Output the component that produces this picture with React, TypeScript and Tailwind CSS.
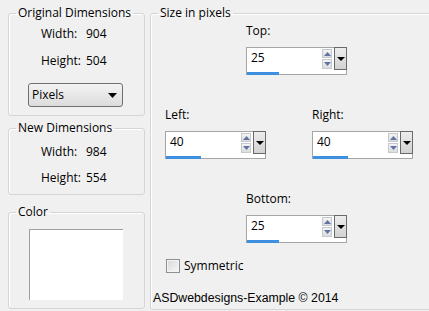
import React from "react";

const UI = { fontFamily: '"Open Sans", "Noto Sans", sans-serif' };

function Group({
  title,
  className,
  children,
}: {
  title: string;
  className: string;
  children?: React.ReactNode;
}) {
  return (
    <fieldset
      className={`border border-[#d5d5d5] rounded-[3px] shadow-[inset_1px_1px_0_#ffffff] ${className}`}
    >
      <legend className="ml-[7px] px-[2px] text-[12px] leading-[14px] text-black">
        {title}
      </legend>
      {children}
    </fieldset>
  );
}

function Tri({ up, color, w, h }: { up?: boolean; color: string; w: number; h: number }) {
  return (
    <svg width={w} height={h} viewBox={`0 0 ${w} ${h}`}>
      <polygon
        points={up ? `0,${h} ${w / 2},0 ${w},${h}` : `0,0 ${w},0 ${w / 2},${h}`}
        fill={color}
      />
    </svg>
  );
}

function Spinner({ value, bar }: { value: string; bar: number }) {
  return (
    <div className="relative w-[101px] h-[28px] border border-[#a5a5a5] bg-white">
      <div className="flex h-[23px]">
        <div className="flex-1 pl-[4px] pt-[2px] text-[12px] leading-[16px] text-black">{value}</div>
        <div className="flex flex-col gap-[1px] pt-[1px] w-[10px] mr-[2px]">
          <div className="h-[9px] border border-[#c4c8cf] bg-gradient-to-b from-[#f4f4f4] to-[#dcdcdc] flex items-center justify-center">
            <Tri up color="#5f74a3" w={7} h={4} />
          </div>
          <div className="h-[10px] border border-[#c4c8cf] bg-gradient-to-b from-[#f4f4f4] to-[#dcdcdc] flex items-center justify-center">
            <Tri color="#5f74a3" w={7} h={4} />
          </div>
        </div>
        <div className="w-[13px] h-[23px] border border-[#6a6a6a] bg-gradient-to-b from-[#ededed] to-[#d2d2d2] flex items-center justify-center -mt-[1px] -mr-[1px]">
          <Tri color="#000" w={8} h={4} />
        </div>
      </div>
      <div className="h-[3px] bg-[#3f8fe0] mt-[1px]" style={{ width: bar }} />
    </div>
  );
}

export default function App() {
  return (
    <div
      className="w-[429px] h-[311px] bg-[#f0f0f0] overflow-hidden flex text-black"
      style={UI}
    >
      <div className="ml-[8px] mt-[6px] w-[137px] shrink-0 flex flex-col">
        <Group title="Original Dimensions" className="h-[110px]">
          <div className="pt-[6px] pl-[32px] text-[12px] leading-[16px]">
            <div className="flex">
              <span className="w-[45px]">Width:</span>
              <span>904</span>
            </div>
            <div className="flex mt-[11px]">
              <span className="w-[45px]">Height:</span>
              <span>504</span>
            </div>
          </div>
          <div className="mt-[14px] ml-[19px] w-[95px] h-[24px] border border-[#707070] rounded-[3px] bg-gradient-to-b from-[#f3f3f3] to-[#dcdcdc] flex items-center justify-between pl-[3px] pr-[5px] text-[12px]">
            <span>Pixels</span>
            <Tri color="#000" w={9} h={5} />
          </div>
        </Group>
        <Group title="New Dimensions" className="h-[74px] mt-[5px]">
          <div className="pt-[9px] pl-[32px] text-[12px] leading-[16px]">
            <div className="flex">
              <span className="w-[45px]">Width:</span>
              <span>984</span>
            </div>
            <div className="flex mt-[10px]">
              <span className="w-[45px]">Height:</span>
              <span>554</span>
            </div>
          </div>
        </Group>
        <Group title="Color" className="h-[104px] mt-[10px]">
          <div className="mt-[10px] ml-[20px] w-[94px] h-[71px] bg-white border-l border-t border-[#a0a0a0]" />
        </Group>
      </div>

      <Group title="Size in pixels" className="ml-[5px] mt-[6px] w-[284px] h-[304px] shrink-0">
        <div className="flex flex-col text-[12px] leading-[16px]">
          <div className="pl-[95px] pt-[3px]">
            <div>Top:</div>
            <div className="mt-[8px]">
              <Spinner value="25" bar={32} />
            </div>
          </div>
          <div className="flex pl-[14px] mt-[32px]">
            <div>
              <div>Left:</div>
              <div className="mt-[8px]">
                <Spinner value="40" bar={35} />
              </div>
            </div>
            <div className="ml-[46px]">
              <div>Right:</div>
              <div className="mt-[8px]">
                <Spinner value="40" bar={35} />
              </div>
            </div>
          </div>
          <div className="pl-[95px] mt-[32px]">
            <div>Bottom:</div>
            <div className="mt-[8px]">
              <Spinner value="25" bar={32} />
            </div>
          </div>
          <div className="flex items-center pl-[15px] mt-[16px] h-[14px]">
            <div className="w-[14px] h-[14px] border border-[#8e8f8f] bg-gradient-to-br from-[#d8d8d8] to-[#f8f8f8] shadow-[inset_0_0_0_1px_#f4f4f4]" />
            <span className="ml-[4px]">Symmetric</span>
          </div>
          <div
            className="pl-[2px] mt-[17px] text-[12.3px]"
            style={{ fontFamily: '"Liberation Sans", Arial, sans-serif' }}
          >
            ASDwebdesigns-Example © 2014
          </div>
        </div>
      </Group>
    </div>
  );
}
